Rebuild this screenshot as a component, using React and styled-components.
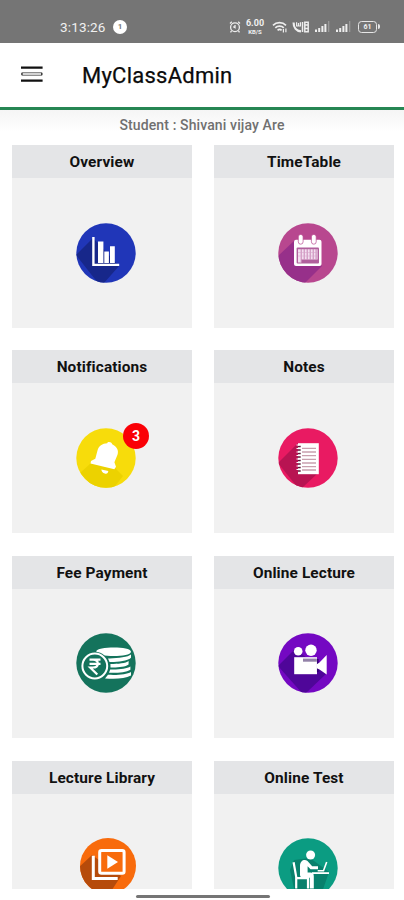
import React from 'react';
import styled, { createGlobalStyle } from 'styled-components';

const GlobalStyle = createGlobalStyle`
  body {
    margin: 0;
    background: #fff;
    font-family: Roboto, 'Liberation Sans', sans-serif;
  }
`;

const Screen = styled.div`
  width: 404px;
  height: 900px;
  display: flex;
  flex-direction: column;
  overflow: hidden;
  background: #fff;
`;

const StatusBar = styled.div`
  height: 43px;
  flex: none;
  box-sizing: border-box;
  padding: 10px 24px 0 60px;
  display: flex;
  align-items: center;
  background: #757575;
  color: #f0f0f0;
`;

const Clock = styled.span`
  width: 48px;
  font-size: 13.5px;
  line-height: 16px;
  letter-spacing: 0.15px;
`;

const Dot = styled.span`
  width: 14px;
  height: 14px;
  margin-left: 5px;
  border-radius: 50%;
  background: #fff;
  color: #777;
  font-size: 8px;
  font-weight: 700;
  line-height: 14px;
  text-align: center;
`;

const StatusIcons = styled.div`
  margin-left: auto;
  display: flex;
  align-items: center;
`;

const StatusSvg = styled.svg`
  display: block;
  margin-left: ${(props) => props.$gap || 0}px;
`;

const Speed = styled.div`
  width: 20px;
  margin-left: 4px;
  display: flex;
  flex-direction: column;
  align-items: center;
  font-weight: 700;
  font-size: 9px;
  line-height: 9px;
`;

const SpeedUnit = styled.span`
  font-size: 6px;
  line-height: 7px;
`;

const Battery = styled.div`
  width: 19px;
  height: 12px;
  box-sizing: border-box;
  margin-left: 7px;
  border: 1.5px solid #e6e6e6;
  border-radius: 3.5px;
  font-size: 7px;
  font-weight: 700;
  line-height: 10px;
  text-align: center;
`;

const BatteryTip = styled.span`
  width: 2px;
  height: 5px;
  margin-left: 1px;
  border-radius: 0 2px 2px 0;
  background: #e6e6e6;
`;

const Toolbar = styled.header`
  height: 67px;
  flex: none;
  box-sizing: border-box;
  padding: 0 22px 3px 21px;
  display: flex;
  align-items: center;
  border-bottom: 3px solid #268653;
`;

const Title = styled.h1`
  margin: 4px 0 0 39px;
  font-size: 22px;
  font-weight: 400;
  line-height: 28px;
  letter-spacing: 0.24px;
  color: #0b0b0b;
  -webkit-text-stroke: 0.25px #0b0b0b;
`;

const Student = styled.div`
  height: 35px;
  flex: none;
  padding-top: 7px;
  box-sizing: border-box;
  background: linear-gradient(#f5f5f5, #fff 22px);
  font-size: 14px;
  font-weight: 500;
  line-height: 16px;
  letter-spacing: 0.12px;
  text-align: center;
  color: #707070;
`;

const Grid = styled.main`
  height: 744px;
  flex: none;
  padding: 0 10px 0 12px;
  box-sizing: border-box;
  display: grid;
  grid-template-columns: 180px 180px;
  grid-auto-rows: 182.5px;
  gap: 22.8px 22px;
  overflow: hidden;
`;

const Card = styled.section`
  display: flex;
  flex-direction: column;
  background: #f1f1f1;
`;

const CardTitle = styled.h2`
  height: 33px;
  margin: 0;
  background: #e4e5e7;
  font-size: 15.4px;
  font-weight: 700;
  line-height: 35px;
  letter-spacing: 0.12px;
  text-align: center;
  color: #111;
`;

const CardBody = styled.div`
  flex: 1;
  display: flex;
  align-items: center;
  justify-content: center;
  padding: 0 0 ${(props) => props.$lift || 0}px 8px;
`;

const IconBox = styled.div`
  position: relative;
  width: 60px;
  height: 60px;
`;

const Badge = styled.span`
  position: absolute;
  top: -5px;
  right: -13px;
  width: 26px;
  height: 26px;
  border-radius: 50%;
  background: #fa0006;
  color: #fff;
  font-size: 14px;
  font-weight: 700;
  line-height: 27px;
  text-align: center;
`;

const Footer = styled.footer`
  height: 11px;
  flex: none;
  display: flex;
  justify-content: center;
  padding: 6px 0 0 2px;
  box-sizing: border-box;
`;

const HomeBar = styled.div`
  width: 134px;
  height: 3px;
  border-radius: 2px;
  background: #757575;
`;

// Coloured disc with a long shadow clipped to it; the glyph goes on top
const Disc = ({ id, color, shade, shadow, r = 29.7, cx = 30, children }) => (
  <svg width="60" height="60" viewBox="0 0 60 60">
    <clipPath id={id}>
      <circle cx={cx} cy="30" r={r} />
    </clipPath>
    <circle cx={cx} cy="30" r={r} fill={color} />
    {shadow && <path d={shadow} fill={shade} clipPath={`url(#${id})`} />}
    {children}
  </svg>
);

const OverviewIcon = () => (
  <Disc id="overview" color="#2036b8" shade="#17278a" shadow="M17 15L0 32L22 60H28L43 43Z">
    <path d="M16.2 14h2.4v26.7h24.6v2.2h-27z" fill="#fff" />
    <path d="M22 18.5h5.4V40H22zM28.3 28.5h4.6V40h-4.6zM34 23.3h4.8V40H34z" fill="#fff" />
  </Disc>
);

const CalendarIcon = () => (
  <Disc id="timetable" color="#b8478f" shade="#97308a" shadow="M17 17L0 33V60H27L44 43Z">
    <rect x="16" y="16.7" width="27.5" height="26.4" rx="2" fill="#fff" />
    <path d="M20.3 13.8a2.4 2.4 0 0 1 4.8 0v5a2.4 2.4 0 0 1-4.8 0zM33.4 13.8a2.4 2.4 0 0 1 4.8 0v5a2.4 2.4 0 0 1-4.8 0z" fill="#fff" stroke="#b8478f" strokeWidth="0.7" />
    <rect x="18.6" y="24.6" width="22.4" height="15.8" rx="1" fill="#b0609c" />
    <path d="M20 26.3h19.6v10.2H23.4v3H20z" fill="#f3dff0" />
    <path d="M23.2 26v13M26.2 26v10.5M29.2 26v10.5M32.2 26v10.5M35.2 26v10.5M38.1 26v10.5" stroke="#c27baf" strokeWidth="0.9" />
    <path d="M20 29.5h20M20 33h20" stroke="#d5a0c8" strokeWidth="0.5" />
  </Disc>
);

const BellIcon = () => (
  <Disc id="notifications" color="#f7dc0b" shade="#ecd200" shadow="M15 35L4 45L20 62H36L47 48L39 40Z">
    <g transform="translate(0 -5)">
      <path
        d="M31.2 20.2C31.4 18.3 35.7 18.5 36.2 21.2C40.8 23.5 43 27.2 41.5 31.8L38.4 39.2L40 43.7L38.3 46.2L14.5 40.6L15 38L19.3 35.7L21.5 27.5C22.5 22.9 26.5 20.3 31.2 20.2Z"
        fill="#fff"
      />
      <path d="M25.4 46.4L32.3 48C32.2 50 30.8 51.2 28.8 50.4C26.8 50 25.3 48 25.4 46.4Z" fill="#fff" />
    </g>
  </Disc>
);

const NotesIcon = () => (
  <Disc id="notes" color="#e91a62" shade="#b81452" shadow="M20 15L0 35L20 60H24L40 45Z">
    <path d="M20 15.2h20.8v31H20z" fill="#fff" />
    <path d="M20 18.5h2.7M20 22h2.7M20 25.5h2.7M20 29h2.7M20 32.5h2.7M20 36h2.7M20 39.5h2.7M20 43h2.7" stroke="#5e1937" strokeWidth="1.3" />
    <path d="M18.5 17h3M18.5 20.5h3M18.5 24h3M18.5 27.5h3M18.5 31h3M18.5 34.5h3M18.5 38h3M18.5 41.5h3" stroke="#fff" strokeWidth="1" />
    <path d="M24 20.4h14M24 24h14M24 27.7h14M24 31.4h14M24 35h14M24 38.7h14M24 42h14" stroke="#c9a0ae" strokeWidth="1.3" />
  </Disc>
);

const FeeIcon = () => (
  <Disc id="fee" color="#14735c">
    <path d="M20.3 18.5C20.3 13.4 54.7 12.8 55 18.7C54.8 24.5 20.2 24.5 20.3 18.5Z" fill="#fff" />
    <path
      d="M32 25.4C41 25.6 52 24.2 55 21.6V24.7C51 28.2 42 29 33.5 28.9ZM34.4 31C42 31 50 30.2 52.6 28V31.5C49 34 42 34.6 34.5 34.4ZM34.2 36.4C43 36.7 51 35.6 54.4 33.5V36.8C50 39.5 42 40 33 39.8ZM32 41.8C42 42.3 51 41.4 55 38.9V42.5C49 45.6 40 46.2 29 45.4Z"
      fill="#fff"
    />
    <circle cx="18.8" cy="33" r="14.3" fill="#14735c" />
    <circle cx="18.8" cy="33" r="12.4" fill="none" stroke="#fff" strokeWidth="2" />
    <path
      d="M13.5 26.7H24.5M13.5 30.8H24.5M14 26.7H17C23.7 26.7 23.3 34.5 16.8 34.5H14.2L21.3 41.5"
      fill="none"
      stroke="#fff"
      strokeWidth="2.2"
    />
  </Disc>
);

const CameraIcon = () => (
  <Disc id="lecture" color="#7408c2" shade="#4f0699" shadow="M17 16L0 33L24 60H28L49 40Z">
    <circle cx="20.2" cy="18.3" r="4.3" fill="#fff" />
    <circle cx="33" cy="17.3" r="5.7" fill="#fff" />
    <rect x="16.2" y="24.2" width="22.8" height="17" fill="#fff" />
    <path d="M25 25.6h13.8v3.1H25z" fill="#9382a8" />
    <path d="M39.8 26V39" stroke="#340076" strokeWidth="1.7" />
    <path d="M38.8 31.2L41.5 29.5L48.7 22V41.5L41.5 36.5L38.8 35.3Z" fill="#fff" />
  </Disc>
);

const LibraryIcon = () => (
  <Disc id="library" color="#f86b0c" shade="#b64b0b" shadow="M16 19L0 34V60H32L45 40Z" r={28} cx={32}>
    <path d="M17.3 19.8V42.5H41.7" fill="none" stroke="#fff" strokeWidth="3" />
    <rect x="23.7" y="14.6" width="24.4" height="22.6" rx="1.8" fill="#f86b0c" stroke="#fff" strokeWidth="3" />
    <path d="M31.3 19.2L42 26L31.3 32.7Z" fill="#fff" />
  </Disc>
);

const TestIcon = () => (
  <Disc id="test" color="#0b9c82" shade="#08806c" shadow="M16 22L12 32L18 60H42L51 34L32 20Z">
    <circle cx="32.6" cy="17" r="4.5" fill="#fff" />
    <path
      d="M22 37V27.5C22.2 22.5 26.5 20.7 29.5 23L34.2 28.2H40V31.2H32.5L29.6 28.2V34.6H32.3C34.8 34.6 35.8 36 35.8 38.2V50.5H31.8V39.7H25C23 39.6 22 38.7 22 37Z"
      fill="#fff"
    />
    <path d="M15.6 24.3L18.2 38.8V50.5M18.2 40.2H30V50.5" fill="none" stroke="#fff" strokeWidth="2.2" />
    <path d="M34 34.2H51V36H34z" fill="#fff" />
    <path d="M39.7 32.7H45.5L48.7 24" fill="none" stroke="#fff" strokeWidth="1.6" />
  </Disc>
);

const AlarmIcon = () => (
  <StatusSvg width="12" height="12" viewBox="0 0 12 12" fill="none" stroke="#eee" strokeWidth="1.3">
    <circle cx="6" cy="6.3" r="4.4" />
    <path d="M6 4v2.6l-1.7-1M1 2.4L2.8.8M11 2.4L9.2.8M2.5 10l-1 1.3M9.5 10l1 1.3" />
  </StatusSvg>
);

const WifiIcon = () => (
  <StatusSvg $gap={7} width="16" height="12" viewBox="0 0 16 12" fill="none" stroke="#eee" strokeWidth="1.7">
    <path d="M1 4.3C4.5.8 10.5.8 14 4.3M3.3 6.9c2.3-2.3 6.2-2.3 8.5 0M5.6 9.3c1.2-1.2 2.8-1.2 4 0" />
    <path d="M11.4 8v3.6M13.9 7.5v3.8" strokeWidth="1.2" />
  </StatusSvg>
);

const CallIcon = () => (
  <StatusSvg $gap={4} width="17" height="12" viewBox="0 0 17 12" fill="none" stroke="#eee">
    <path d="M1.6 1.5C1.5 6.5 4.5 10 9 10.4" strokeWidth="2.2" />
    <path d="M4.6 1.2V5h3.8V1.2M6.5 5V2" strokeWidth="1.2" />
    <path d="M10.5 1v10M12.8 1.3h3.4v9.4h-3.4zM13 4h3M13 7.5h3" strokeWidth="1.5" />
  </StatusSvg>
);

const SignalIcon = () => (
  <StatusSvg $gap={5} width="16" height="13" viewBox="0 0 16 13">
    <path d="M1 9.5h2V12H1zM4.2 8h2v4h-2zM7.4 6h2v6h-2zM10.4 4h2v8h-2z" fill="#eee" />
    <path d="M14 1h1.3v11H14z" fill="#999" />
  </StatusSvg>
);

const MenuIcon = () => (
  <svg width="22" height="16" viewBox="0 0 22 16">
    <path d="M0 1.6h21.6M0 14.6h21.6" stroke="#111" strokeWidth="2.1" />
    <rect x="0.7" y="6.6" width="20.4" height="2.8" rx="1" fill="#ddd" stroke="#777" strokeWidth="0.9" />
    <path d="M1 6.8v2.4M20.7 6.8v2.4" stroke="#333" strokeWidth="1.2" />
  </svg>
);

const cards = [
  { title: 'Overview', Icon: OverviewIcon },
  { title: 'TimeTable', Icon: CalendarIcon },
  { title: 'Notifications', Icon: BellIcon, badge: 3 },
  { title: 'Notes', Icon: NotesIcon },
  { title: 'Fee Payment', Icon: FeeIcon },
  { title: 'Online Lecture', Icon: CameraIcon },
  { title: 'Lecture Library', Icon: LibraryIcon, lift: 6 },
  { title: 'Online Test', Icon: TestIcon, lift: 2 },
];

const App = () => {
  return (
    <Screen>
      <GlobalStyle />
      <StatusBar>
        <Clock>3:13:26</Clock>
        <Dot>1</Dot>
        <StatusIcons>
          <AlarmIcon />
          <Speed>
            6.00
            <SpeedUnit>KB/S</SpeedUnit>
          </Speed>
          <WifiIcon />
          <CallIcon />
          <SignalIcon />
          <SignalIcon />
          <Battery>61</Battery>
          <BatteryTip />
        </StatusIcons>
      </StatusBar>
      <Toolbar>
        <MenuIcon />
        <Title>MyClassAdmin</Title>
      </Toolbar>
      <Student>Student : Shivani vijay Are</Student>
      <Grid>
        {cards.map(({ title, Icon, badge, lift }) => (
          <Card key={title}>
            <CardTitle>{title}</CardTitle>
            <CardBody $lift={lift}>
              <IconBox>
                <Icon />
                {badge && <Badge>{badge}</Badge>}
              </IconBox>
            </CardBody>
          </Card>
        ))}
      </Grid>
      <Footer>
        <HomeBar />
      </Footer>
    </Screen>
  );
};

export default App;
